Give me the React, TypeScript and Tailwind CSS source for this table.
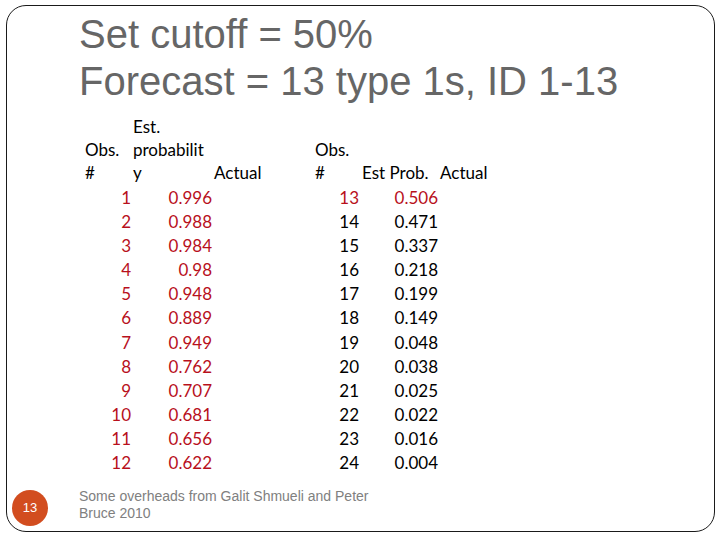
import React from "react";

const leftRows: [string, string][] = [
  ["1", "0.996"],
  ["2", "0.988"],
  ["3", "0.984"],
  ["4", "0.98"],
  ["5", "0.948"],
  ["6", "0.889"],
  ["7", "0.949"],
  ["8", "0.762"],
  ["9", "0.707"],
  ["10", "0.681"],
  ["11", "0.656"],
  ["12", "0.622"],
];

const rightRows: [string, string, boolean][] = [
  ["13", "0.506", true],
  ["14", "0.471", false],
  ["15", "0.337", false],
  ["16", "0.218", false],
  ["17", "0.199", false],
  ["18", "0.149", false],
  ["19", "0.048", false],
  ["20", "0.038", false],
  ["21", "0.025", false],
  ["22", "0.022", false],
  ["23", "0.016", false],
  ["24", "0.004", false],
];

export default function App() {
  return (
    <div className="w-[720px] h-[540px] bg-white pt-[5px] pl-[6px] overflow-hidden">
      <div className="w-[709px] h-[527px] border border-[#1a1a1a] rounded-[20px] flex flex-col">
        {/* Title */}
        <div
          className="pl-[72px] pt-[5px] text-[40px] leading-[47px] text-[#666666]"
          style={{ fontFamily: '"Liberation Sans", Arial, sans-serif' }}
        >
          <div>Set cutoff = 50%</div>
          <div>Forecast = 13 type 1s, ID 1-13</div>
        </div>

        {/* Tables */}
        <div
          className="mt-[12px] ml-[78px] flex items-start gap-[51px] text-[17px] text-black"
          style={{ fontFamily: 'Lato, "Open Sans", sans-serif' }}
        >
          {/* Left table */}
          <div className="flex flex-col">
            <div className="flex items-end h-[69px] pb-[2px] leading-[23px]">
              <div className="w-[48px]">
                <div>Obs.</div>
                <div>#</div>
              </div>
              <div className="w-[81px]">
                <div>Est.</div>
                <div>probabilit</div>
                <div>y</div>
              </div>
              <div className="w-[50px]">Actual</div>
            </div>
            {leftRows.map(([n, p]) => (
              <div key={n} className="flex h-[24.1px] leading-[24.1px] text-[#b8101c]">
                <div className="w-[48px] text-right pr-[2px]">{n}</div>
                <div className="w-[81px] text-right pr-[2px]">{p}</div>
                <div className="w-[50px]"></div>
              </div>
            ))}
          </div>

          {/* Right table */}
          <div className="flex flex-col">
            <div className="flex items-end h-[69px] pb-[2px] leading-[23px]">
              <div className="w-[47px]">
                <div>Obs.</div>
                <div>#</div>
              </div>
              <div className="w-[78px]">Est Prob.</div>
              <div className="w-[52px]">Actual</div>
            </div>
            {rightRows.map(([n, p, red]) => (
              <div
                key={n}
                className={
                  red
                    ? "flex h-[24.1px] leading-[24.1px] text-[#b8101c]"
                    : "flex h-[24.1px] leading-[24.1px] text-black"
                }
              >
                <div className="w-[47px] text-right pr-[3px]">{n}</div>
                <div className="w-[78px] text-right pr-[2px]">{p}</div>
                <div className="w-[52px]"></div>
              </div>
            ))}
          </div>
        </div>

        {/* Footer */}
        <div
          className="mt-[13px] ml-[5px] flex items-start"
          style={{ fontFamily: '"Liberation Sans", Arial, sans-serif' }}
        >
          <div className="mt-[2px] w-[36px] h-[36px] rounded-full bg-[#d24d1f] flex items-center justify-center text-white text-[13px]">
            13
          </div>
          <div className="ml-[31px] w-[300px] text-[14px] leading-[17px] text-[#808080]">
            Some overheads from Galit Shmueli and Peter Bruce 2010
          </div>
        </div>
      </div>
    </div>
  );
}
